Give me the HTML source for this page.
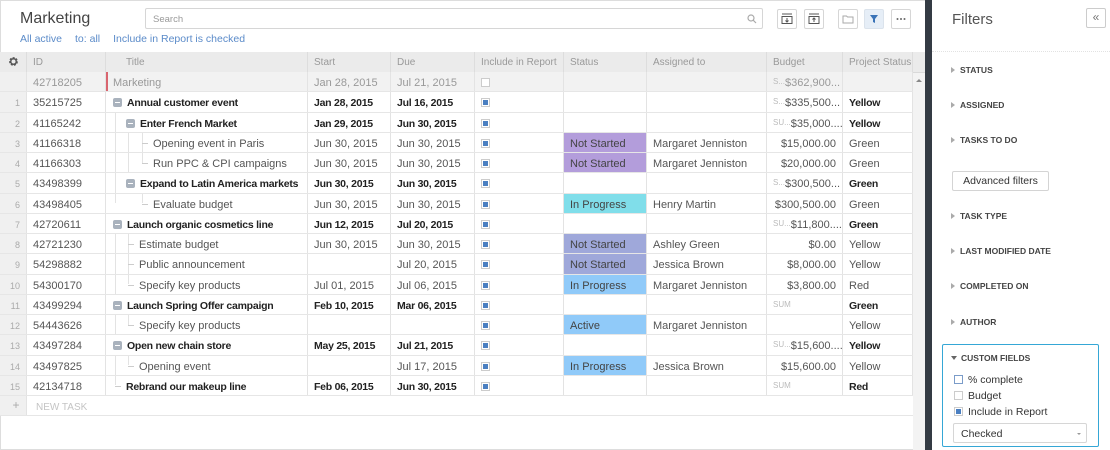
<!DOCTYPE html>
<html><head><meta charset="utf-8"><style>
*{box-sizing:border-box;margin:0;padding:0}
body{width:1110px;height:450px;overflow:hidden;background:#fff;font-family:"Liberation Sans",sans-serif;font-size:11px;color:#555;position:relative}
.frame{position:absolute;left:0;top:0;width:1110px;height:450px;border:1px solid #ddd}
.title{position:absolute;left:20px;top:10px;font-size:16px;color:#444}
.links{position:absolute;left:20px;top:33px;font-size:10.5px;color:#5b8bc9}
.links span{margin-right:13px}
.search{position:absolute;left:145px;top:8px;width:618px;height:21px;border:1px solid #d6d6d6;border-radius:2px;padding:5px 7px;font-size:9.5px;color:#999}
.btn{position:absolute;top:9px;width:20px;height:20px;border:1px solid #d6d6d6;border-radius:2px;background:#fff}
.grid{position:absolute;left:0;top:52px;width:913px}
.hd{position:absolute;top:0;height:21px;background:#ebebeb;border-right:1px solid #ddd;border-bottom:1px solid #d9d9d9;color:#999;font-size:10px;padding:5px 6px;white-space:nowrap}
.r{position:absolute;left:0;width:913px;height:20.25px;border-bottom:1px solid #e6e6e6}
.c{position:absolute;top:0;height:100%;border-right:1px solid #e3e3e3;padding:5px 6px 0;white-space:nowrap;overflow:hidden}
.n{left:0;width:27px;background:#f0f0f0;color:#aaa;font-size:9px;text-align:right;padding-right:6px;padding-top:6px}
.id{left:27px;width:79px}
.t{left:106px;width:202px;padding-left:0}
.s{left:308px;width:83px}
.d{left:391px;width:84px}
.i{left:475px;width:89px}
.st{left:564px;width:83px;color:#444}
.a{left:647px;width:120px}
.b{left:767px;width:76px;text-align:right}
.p{left:843px;width:70px}
.bold{color:#222;font-weight:bold;font-size:10.5px;letter-spacing:-0.25px}
.cb{display:inline-block;width:9px;height:9px;border:1px solid #ccc;background:#fff;position:relative;top:1px}
.cb.on::after{content:"";position:absolute;left:1px;top:1px;width:5px;height:5px;background:#4a7fc1}
.mn{display:inline-block;width:9px;height:9px;border-radius:2px;background:#a9b2bd;position:relative;vertical-align:-1px;margin-right:5px}
.mn::after{content:"";position:absolute;left:2px;top:4px;width:5px;height:1px;background:#fff}
.sum{color:#bbb;font-size:8px;float:left;font-weight:normal;letter-spacing:0}
.ttx{position:absolute;top:5px}
.vl{position:absolute;top:0;height:100%;width:1px;background:#e3e3e3}
.hl{position:absolute;top:10px;width:6px;height:1px;background:#ccc}
.panel{position:absolute;left:932px;top:0;width:178px;height:450px;background:#fff}
.fsec{position:absolute;left:19px;font-size:8.5px;font-weight:bold;color:#444}
.fsec::before{content:"";display:inline-block;border-left:4px solid #aaa;border-top:3px solid transparent;border-bottom:3px solid transparent;margin-right:5px;vertical-align:0}
</style></head><body>
<div class="frame"></div>
<div class="title">Marketing</div>
<div class="links"><span>All active</span><span>to: all</span><span>Include in Report is checked</span></div>
<div class="search">Search<svg style="position:absolute;right:5px;top:5px" width="10" height="10" viewBox="0 0 10 10"><circle cx="4" cy="4" r="3" fill="none" stroke="#aaa" stroke-width="1.2"/><path d="M6.2 6.2L9 9" stroke="#aaa" stroke-width="1.2"/></svg></div>
<div class="btn" style="left:777px"><svg width="18" height="18" viewBox="0 0 18 18"><path d="M4 4h10M4 6.5h10v7H4z" fill="none" stroke="#555"/><path d="M9 8v4M7.5 10.5L9 12l1.5-1.5" fill="none" stroke="#555"/></svg></div>
<div class="btn" style="left:804px"><svg width="18" height="18" viewBox="0 0 18 18"><path d="M4 4h10M4 6.5h10v7H4z" fill="none" stroke="#555"/><path d="M9 12V8M7.5 9.5L9 8l1.5 1.5" fill="none" stroke="#555"/></svg></div>
<div class="btn" style="left:838px"><svg width="18" height="18" viewBox="0 0 18 18"><path d="M4 6h3.5l1 1H14v6H4z" fill="none" stroke="#aaa"/></svg></div>
<div class="btn" style="left:864px;background:#e6eef7;border-color:#dbe3ec"><svg width="18" height="18" viewBox="0 0 18 18"><path d="M5 5h8l-3 4v4l-2-1V9z" fill="#3a73b7"/></svg></div>
<div class="btn" style="left:891px"><svg width="18" height="18" viewBox="0 0 18 18"><circle cx="5.5" cy="9" r="1" fill="#666"/><circle cx="9" cy="9" r="1" fill="#666"/><circle cx="12.5" cy="9" r="1" fill="#666"/></svg></div>

<div class="grid">
<div class="hd" style="left:0;width:27px;text-align:center;padding:4px 0"><svg width="11" height="11" viewBox="0 0 12 12"><circle cx="6" cy="6" r="3.6" fill="none" stroke="#555" stroke-width="2.4" stroke-dasharray="2 1.2"/><circle cx="6" cy="6" r="3" fill="none" stroke="#555" stroke-width="1.6"/></svg></div>
<div class="hd" style="left:27px;width:79px">ID</div>
<div class="hd" style="left:106px;width:202px;padding-left:20px">Title</div>
<div class="hd" style="left:308px;width:83px">Start</div>
<div class="hd" style="left:391px;width:84px">Due</div>
<div class="hd" style="left:475px;width:89px">Include in Report</div>
<div class="hd" style="left:564px;width:83px">Status</div>
<div class="hd" style="left:647px;width:120px">Assigned to</div>
<div class="hd" style="left:767px;width:76px">Budget</div>
<div class="hd" style="left:843px;width:70px">Project Status</div>
</div>
<div style="position:absolute;left:913px;top:52px;width:12px;height:21px;background:#ebebeb;border-bottom:1px solid #d9d9d9"></div>
<div style="position:absolute;left:913px;top:73px;width:12px;height:377px;background:#f3f3f3"></div>
<div style="position:absolute;left:916px;top:79px;border-bottom:3px solid #888;border-left:3px solid transparent;border-right:3px solid transparent"></div>

<div style="position:absolute;left:0;top:72px">
<div class="r" style="top:0;background:#f2f2f2;color:#999"><div class="c n" style="background:#f0f0f0"></div><div class="c id">42718205</div><div class="c t" style="border-left:2px solid #d9656f;padding-left:5px">Marketing</div><div class="c s">Jan 28, 2015</div><div class="c d">Jul 21, 2015</div><div class="c i"><span class="cb"></span></div><div class="c st"></div><div class="c a"></div><div class="c b"><span class="sum">S...</span>$362,900...</div><div class="c p"></div></div>

<div class="r" style="top:20.25px"><div class="c n">1</div><div class="c id">35215725</div><div class="c t bold"><span class="ttx" style="left:7px"><span class="mn"></span>Annual customer event</span></div><div class="c s bold">Jan 28, 2015</div><div class="c d bold">Jul 16, 2015</div><div class="c i"><span class="cb on"></span></div><div class="c st"></div><div class="c a"></div><div class="c b"><span class="sum">S...</span>$335,500...</div><div class="c p bold">Yellow</div></div>

<div class="r" style="top:40.5px"><div class="c n">2</div><div class="c id">41165242</div><div class="c t bold"><div class="vl" style="left:9px"></div><span class="ttx" style="left:20px"><span class="mn"></span>Enter French Market</span></div><div class="c s bold">Jan 29, 2015</div><div class="c d bold">Jun 30, 2015</div><div class="c i"><span class="cb on"></span></div><div class="c st"></div><div class="c a"></div><div class="c b"><span class="sum">SU...</span>$35,000....</div><div class="c p bold">Yellow</div></div>

<div class="r" style="top:60.75px"><div class="c n">3</div><div class="c id">41166318</div><div class="c t"><div class="vl" style="left:9px"></div><div class="vl" style="left:22px"></div><div class="vl" style="left:36px"></div><div class="hl" style="left:36px"></div><span class="ttx" style="left:47px">Opening event in Paris</span></div><div class="c s">Jun 30, 2015</div><div class="c d">Jun 30, 2015</div><div class="c i"><span class="cb on"></span></div><div class="c st" style="background:#b39ddb">Not Started</div><div class="c a">Margaret Jenniston</div><div class="c b">$15,000.00</div><div class="c p">Green</div></div>

<div class="r" style="top:81px"><div class="c n">4</div><div class="c id">41166303</div><div class="c t"><div class="vl" style="left:9px"></div><div class="vl" style="left:22px"></div><div class="vl" style="left:36px;height:50%"></div><div class="hl" style="left:36px"></div><span class="ttx" style="left:47px">Run PPC &amp; CPI campaigns</span></div><div class="c s">Jun 30, 2015</div><div class="c d">Jun 30, 2015</div><div class="c i"><span class="cb on"></span></div><div class="c st" style="background:#b39ddb">Not Started</div><div class="c a">Margaret Jenniston</div><div class="c b">$20,000.00</div><div class="c p">Green</div></div>

<div class="r" style="top:101.25px"><div class="c n">5</div><div class="c id">43498399</div><div class="c t bold"><div class="vl" style="left:9px"></div><span class="ttx" style="left:20px"><span class="mn"></span>Expand to Latin America markets</span></div><div class="c s bold">Jun 30, 2015</div><div class="c d bold">Jun 30, 2015</div><div class="c i"><span class="cb on"></span></div><div class="c st"></div><div class="c a"></div><div class="c b"><span class="sum">S...</span>$300,500...</div><div class="c p bold">Green</div></div>

<div class="r" style="top:121.5px"><div class="c n">6</div><div class="c id">43498405</div><div class="c t"><div class="vl" style="left:9px;height:50%"></div><div class="vl" style="left:36px;height:50%"></div><div class="hl" style="left:36px"></div><span class="ttx" style="left:47px">Evaluate budget</span></div><div class="c s">Jun 30, 2015</div><div class="c d">Jun 30, 2015</div><div class="c i"><span class="cb on"></span></div><div class="c st" style="background:#80deea">In Progress</div><div class="c a">Henry Martin</div><div class="c b">$300,500.00</div><div class="c p">Green</div></div>

<div class="r" style="top:141.75px"><div class="c n">7</div><div class="c id">42720611</div><div class="c t bold"><span class="ttx" style="left:7px"><span class="mn"></span>Launch organic cosmetics line</span></div><div class="c s bold">Jun 12, 2015</div><div class="c d bold">Jul 20, 2015</div><div class="c i"><span class="cb on"></span></div><div class="c st"></div><div class="c a"></div><div class="c b"><span class="sum">SU...</span>$11,800....</div><div class="c p bold">Green</div></div>

<div class="r" style="top:162px"><div class="c n">8</div><div class="c id">42721230</div><div class="c t"><div class="vl" style="left:9px"></div><div class="vl" style="left:22px"></div><div class="hl" style="left:22px"></div><span class="ttx" style="left:33px">Estimate budget</span></div><div class="c s">Jun 30, 2015</div><div class="c d">Jun 30, 2015</div><div class="c i"><span class="cb on"></span></div><div class="c st" style="background:#9fa8da">Not Started</div><div class="c a">Ashley Green</div><div class="c b">$0.00</div><div class="c p">Yellow</div></div>

<div class="r" style="top:182.25px"><div class="c n">9</div><div class="c id">54298882</div><div class="c t"><div class="vl" style="left:9px"></div><div class="vl" style="left:22px"></div><div class="hl" style="left:22px"></div><span class="ttx" style="left:33px">Public announcement</span></div><div class="c s"></div><div class="c d">Jul 20, 2015</div><div class="c i"><span class="cb on"></span></div><div class="c st" style="background:#9fa8da">Not Started</div><div class="c a">Jessica Brown</div><div class="c b">$8,000.00</div><div class="c p">Yellow</div></div>

<div class="r" style="top:202.5px"><div class="c n">10</div><div class="c id">54300170</div><div class="c t"><div class="vl" style="left:9px"></div><div class="vl" style="left:22px;height:50%"></div><div class="hl" style="left:22px"></div><span class="ttx" style="left:33px">Specify key products</span></div><div class="c s">Jul 01, 2015</div><div class="c d">Jul 06, 2015</div><div class="c i"><span class="cb on"></span></div><div class="c st" style="background:#90caf9">In Progress</div><div class="c a">Margaret Jenniston</div><div class="c b">$3,800.00</div><div class="c p">Red</div></div>

<div class="r" style="top:222.75px"><div class="c n">11</div><div class="c id">43499294</div><div class="c t bold"><span class="ttx" style="left:7px"><span class="mn"></span>Launch Spring Offer campaign</span></div><div class="c s bold">Feb 10, 2015</div><div class="c d bold">Mar 06, 2015</div><div class="c i"><span class="cb on"></span></div><div class="c st"></div><div class="c a"></div><div class="c b"><span class="sum">SUM</span></div><div class="c p bold">Green</div></div>

<div class="r" style="top:243px"><div class="c n">12</div><div class="c id">54443626</div><div class="c t"><div class="vl" style="left:9px"></div><div class="vl" style="left:22px;height:50%"></div><div class="hl" style="left:22px"></div><span class="ttx" style="left:33px">Specify key products</span></div><div class="c s"></div><div class="c d"></div><div class="c i"><span class="cb on"></span></div><div class="c st" style="background:#90caf9">Active</div><div class="c a">Margaret Jenniston</div><div class="c b"></div><div class="c p">Yellow</div></div>

<div class="r" style="top:263.25px"><div class="c n">13</div><div class="c id">43497284</div><div class="c t bold"><span class="ttx" style="left:7px"><span class="mn"></span>Open new chain store</span></div><div class="c s bold">May 25, 2015</div><div class="c d bold">Jul 21, 2015</div><div class="c i"><span class="cb on"></span></div><div class="c st"></div><div class="c a"></div><div class="c b"><span class="sum">SU...</span>$15,600....</div><div class="c p bold">Yellow</div></div>

<div class="r" style="top:283.5px"><div class="c n">14</div><div class="c id">43497825</div><div class="c t"><div class="vl" style="left:9px"></div><div class="vl" style="left:22px;height:50%"></div><div class="hl" style="left:22px"></div><span class="ttx" style="left:33px">Opening event</span></div><div class="c s"></div><div class="c d">Jul 17, 2015</div><div class="c i"><span class="cb on"></span></div><div class="c st" style="background:#90caf9">In Progress</div><div class="c a">Jessica Brown</div><div class="c b">$15,600.00</div><div class="c p">Yellow</div></div>

<div class="r" style="top:303.75px"><div class="c n">15</div><div class="c id">42134718</div><div class="c t bold"><div class="vl" style="left:9px;height:50%"></div><div class="hl" style="left:9px"></div><span class="ttx" style="left:20px">Rebrand our makeup line</span></div><div class="c s bold">Feb 06, 2015</div><div class="c d bold">Jun 30, 2015</div><div class="c i"><span class="cb on"></span></div><div class="c st"></div><div class="c a"></div><div class="c b"><span class="sum">SUM</span></div><div class="c p bold">Red</div></div>

<div class="r" style="top:324px"><div class="c n" style="font-size:12px;padding-top:2px;text-align:center;padding-right:0">+</div><div style="position:absolute;left:36px;top:6px;color:#c4c4c4;font-size:10px">NEW TASK</div></div>
</div>

<div style="position:absolute;left:925px;top:0;width:7px;height:450px;background:#343b44"></div>
<div class="panel">
<div style="position:absolute;left:20px;top:11px;font-size:15px;color:#555">Filters</div>
<div style="position:absolute;left:154px;top:8px;width:20px;height:20px;border:1px solid #ccc;border-radius:2px;text-align:center;font-size:12px;line-height:17px;color:#777">«</div>
<div style="position:absolute;left:0;top:51px;width:178px;border-top:1px dotted #e2e2e2"></div>
<div class="fsec" style="top:65px">STATUS</div>
<div class="fsec" style="top:100px">ASSIGNED</div>
<div class="fsec" style="top:135px">TASKS TO DO</div>
<div style="position:absolute;left:20px;top:171px;width:97px;height:20px;border:1px solid #d4d4d4;border-radius:2px;text-align:center;font-size:10.5px;line-height:18px;color:#333">Advanced filters</div>
<div class="fsec" style="top:211px">TASK TYPE</div>
<div class="fsec" style="top:246px">LAST MODIFIED DATE</div>
<div class="fsec" style="top:281px">COMPLETED ON</div>
<div class="fsec" style="top:317px">AUTHOR</div>
<div style="position:absolute;left:10px;top:344px;width:157px;height:103px;border:1px solid #35a7d6;border-radius:2px">
<div style="position:absolute;left:8px;top:8px;font-size:8.5px;font-weight:bold;color:#444"><span style="display:inline-block;border-top:4px solid #666;border-left:3px solid transparent;border-right:3px solid transparent;margin-right:4px;vertical-align:1px"></span>CUSTOM FIELDS</div>
<div style="position:absolute;left:11px;top:29px;font-size:10.5px;color:#333"><span class="cb" style="border-color:#7b9cc9;margin-right:5px"></span>% complete</div>
<div style="position:absolute;left:11px;top:45px;font-size:10.5px;color:#333"><span class="cb" style="margin-right:5px"></span>Budget</div>
<div style="position:absolute;left:11px;top:61px;font-size:10.5px;color:#333"><span class="cb on" style="margin-right:5px"></span>Include in Report</div>
<div style="position:absolute;left:10px;top:78px;width:134px;height:20px;border:1px solid #d6d6d6;border-radius:2px;padding:4px 7px;font-size:10.5px;color:#333">Checked<span style="position:absolute;right:5px;top:9px;border-top:2px solid #999;border-left:2px solid transparent;border-right:2px solid transparent"></span></div>
</div>
</div>
</body></html>
